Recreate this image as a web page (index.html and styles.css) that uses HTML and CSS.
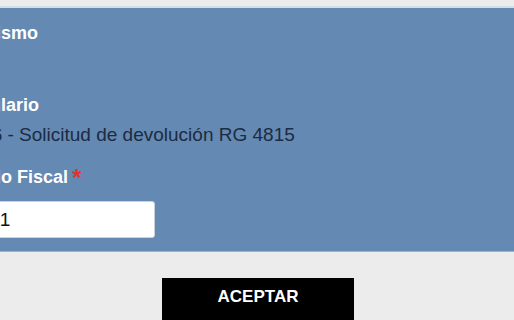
FILE: index.html
```html
<!DOCTYPE html>
<html>
  <head>
    <title>Solicitud</title>
    <meta charset="utf-8">
    <link rel="stylesheet" href="styles.css">
  </head>
  <body>
    <div id="formulario">
      <div class="campo">
        <div class="etiqueta">Organismo</div>
        <div class="valor">&nbsp;</div>
      </div>
      <div class="campo">
        <div class="etiqueta">Formulario</div>
        <div class="valor">F.1116 - Solicitud de devolución RG 4815</div>
      </div>
      <div class="campo">
        <div class="etiqueta">Período Fiscal<span class="obligatorio">*</span></div>
        <input class="entrada" type="text" value="2021">
      </div>
    </div>
    <div id="acciones">
      <button class="boton">ACEPTAR</button>
    </div>
  </body>
</html>
```

FILE: styles.css
```css
body{
  margin: 0;
  padding-top: 6px;
  background-color: #ececec;
  font-family: "Liberation Sans", Arial, sans-serif;
  overflow: hidden;
}
#formulario{
  margin-left: -55px;
  padding: 14px 0 13px 0;
  background-color: #6489b3;
  border-top: 2px solid #d3deeb;
  border-bottom: 1px solid #9cb3cd;
}
.campo{
  margin-bottom: 20px;
}
.campo:last-child{
  margin-bottom: 0;
}
.etiqueta{
  font-size: 18px;
  line-height: 22px;
  font-weight: bold;
  color: #fff;
}
.campo:first-child .etiqueta{
  margin-left: -2px;
}
.obligatorio{
  color: #e2322e;
  margin-left: 4px;
  font-size: 24px;
  line-height: 0;
  vertical-align: -3px;
}
.valor{
  margin: 8px 0 0 3px;
  font-size: 19px;
  line-height: 22px;
  color: #1d2b42;
}
.entrada{
  display: block;
  box-sizing: border-box;
  margin: 13px 0 0 10px;
  width: 200px;
  height: 37px;
  padding: 0 12px;
  font-family: "Liberation Sans", Arial, sans-serif;
  font-size: 19px;
  color: #111;
  background-color: #fff;
  border: 1px solid #c9d3de;
  border-radius: 3px;
}
#acciones{
  display: flex;
  justify-content: center;
  padding: 26px 0 0 2px;
}
.boton{
  width: 192px;
  height: 46px;
  padding: 9px 0 0 0;
  display: flex;
  justify-content: center;
  align-items: flex-start;
  background-color: #000;
  color: #fff;
  border: none;
  font-family: "Liberation Sans", Arial, sans-serif;
  font-size: 17px;
  line-height: 20px;
  font-weight: bold;
}
```
